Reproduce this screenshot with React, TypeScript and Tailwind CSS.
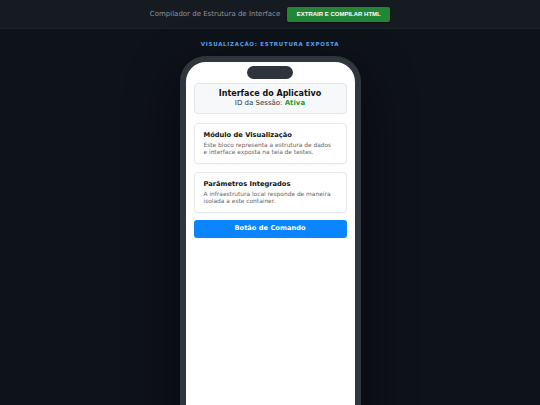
import React from "react";

const dv = { fontFamily: '"DejaVu Sans", Verdana, sans-serif' };

export default function App() {
  return (
    <div className="w-[540px] h-[405px] overflow-hidden bg-[#0e1219] flex flex-col" style={dv}>
      <div className="h-[29px] shrink-0 bg-[#161b22] border-b border-[#1c222b] flex items-center justify-center gap-[7px]">
        <span className="text-[7px] text-[#8b949e] leading-none">Compilador de Estrutura de Interface</span>
        <button
          className="h-[15px] w-[103px] rounded-[2px] bg-[#238636] text-white font-bold text-[6px] leading-none flex items-center justify-center shadow-[0_1px_2px_rgba(0,0,0,0.4)]"
          style={{ fontFamily: '"Liberation Sans", Arial, sans-serif' }}
        >
          EXTRAIR E COMPILAR HTML
        </button>
      </div>
      <div className="flex flex-col items-center pt-[13px]">
        <div className="text-[5.5px] font-bold tracking-[0.7px] text-[#58a6ff] leading-none">
          VISUALIZAÇÃO: ESTRUTURA EXPOSTA
        </div>
        <div className="mt-[8px] w-[181px] h-[400px] rounded-[26px] border-[6px] border-[#30363d] bg-white shadow-[0_20px_50px_rgba(0,0,0,0.6)] shrink-0 overflow-hidden">
          <div className="flex flex-col px-[8px] pt-[4px]">
            <div className="self-center w-[46px] h-[13px] rounded-full bg-[#2f343c]"></div>
            <div className="mt-[4px] rounded-[4px] border border-[#e3e6ea] bg-[#f6f8fa] py-[5px] flex flex-col items-center">
              <div className="text-[8px] font-bold text-[#111] leading-[10px]">Interface do Aplicativo</div>
              <div className="text-[7px] text-[#333] leading-[9px]">
                ID da Sessão: <span className="font-bold text-[#1a9c3a]">Ativa</span>
              </div>
            </div>
            <div className="mt-[9px] rounded-[4px] border border-[#e6e8eb] bg-white px-[9px] py-[7px] shadow-[0_1px_2px_rgba(0,0,0,0.04)]">
              <div className="text-[6.7px] font-bold text-[#111] leading-[8px]">Módulo de Visualização</div>
              <div className="mt-[3px] text-[5.9px] text-[#666] leading-[7px]">
                Este bloco representa a estrutura de dados e interface exposta na tela de testes.
              </div>
            </div>
            <div className="mt-[8px] rounded-[4px] border border-[#e6e8eb] bg-white px-[9px] py-[7px] shadow-[0_1px_2px_rgba(0,0,0,0.04)]">
              <div className="text-[6.7px] font-bold text-[#111] leading-[8px]">Parâmetros Integrados</div>
              <div className="mt-[3px] text-[5.9px] text-[#666] leading-[7px]">
                A infraestrutura local responde de maneira isolada a este container.
              </div>
            </div>
            <button className="mt-[7px] h-[18px] rounded-[3px] bg-[#0a84ff] text-white font-bold text-[6.7px] leading-none flex items-center justify-center">
              Botão de Comando
            </button>
          </div>
        </div>
      </div>
    </div>
  );
}
